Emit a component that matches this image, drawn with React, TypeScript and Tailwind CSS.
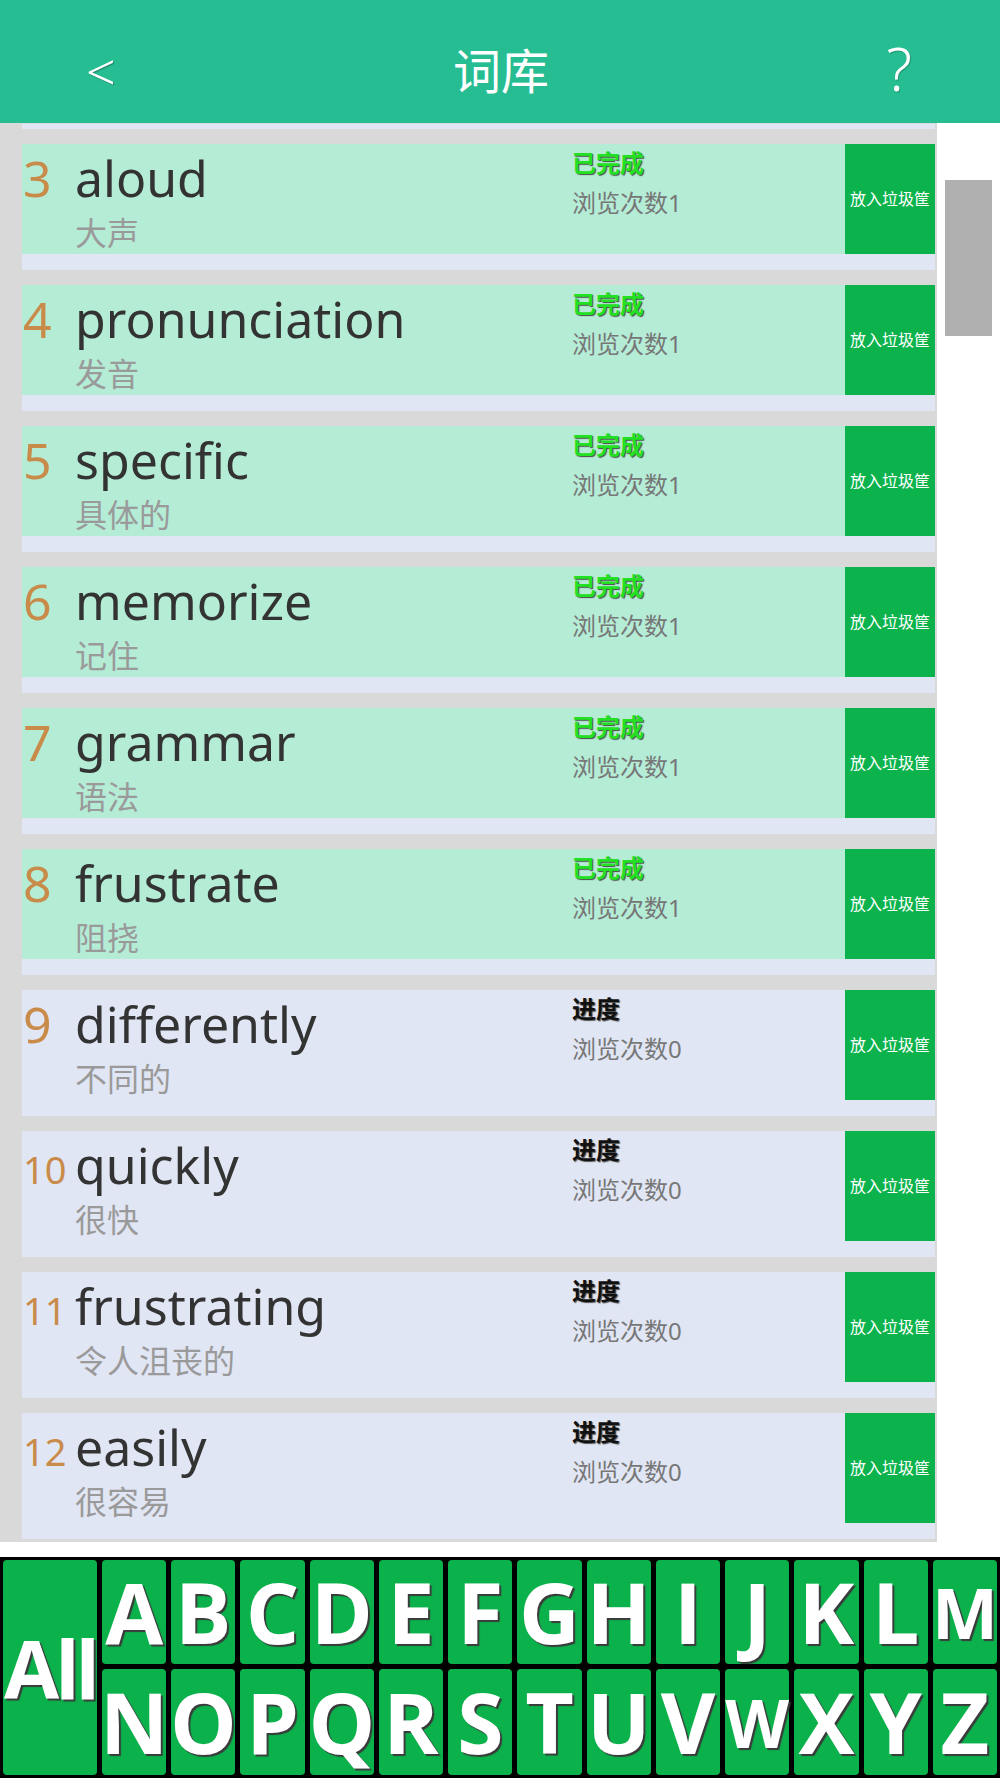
import React from "react";

type Item = { n: number; w: string; m: string; done: boolean; c: number };

const items: Item[] = [
  { n: 3, w: "aloud", m: "大声", done: true, c: 1 },
  { n: 4, w: "pronunciation", m: "发音", done: true, c: 1 },
  { n: 5, w: "specific", m: "具体的", done: true, c: 1 },
  { n: 6, w: "memorize", m: "记住", done: true, c: 1 },
  { n: 7, w: "grammar", m: "语法", done: true, c: 1 },
  { n: 8, w: "frustrate", m: "阻挠", done: true, c: 1 },
  { n: 9, w: "differently", m: "不同的", done: false, c: 0 },
  { n: 10, w: "quickly", m: "很快", done: false, c: 0 },
  { n: 11, w: "frustrating", m: "令人沮丧的", done: false, c: 0 },
  { n: 12, w: "easily", m: "很容易", done: false, c: 0 },
];

const FONT = { fontFamily: '"Noto Sans", "Noto Sans CJK SC", sans-serif' };
const KEYFONT = { fontFamily: '"Open Sans", "Noto Sans", sans-serif' };

const row1 = ["A", "B", "C", "D", "E", "F", "G", "H", "I", "J", "K", "L", "M"];
const row2 = ["N", "O", "P", "Q", "R", "S", "T", "U", "V", "W", "X", "Y", "Z"];

function Key({ k }: { k: string }) {
  const size =
    k === "M" ? "text-[70px]" : k === "W" ? "text-[66px]" : "text-[84px]";
  return (
    <div
      className={`flex min-w-0 items-center justify-center rounded-[4px] bg-[#0bb24c] font-bold leading-none text-white [text-shadow:2px_2px_1px_#3a3a3a] ${size}`}
      style={KEYFONT}
    >
      {k}
    </div>
  );
}

function Row({ it }: { it: Item }) {
  return (
    <div className="flex flex-col bg-[#e1e6f4]">
      <div
        className={`flex h-[110px] ${it.done ? "bg-[#b4ecd6]" : "bg-[#e1e6f4]"}`}
      >
        <div className="flex w-[550px] flex-col pt-[9px]">
          <div className="flex items-baseline">
            <div
              className={`w-[53px] pl-px leading-none text-[#c98b4a] ${
                it.n >= 10 ? "text-[38px]" : "text-[50px]"
              }`}
            >
              {it.n}
            </div>
            <div className="text-[50px] leading-none text-[#333333]">
              {it.w}
            </div>
          </div>
          <div className="ml-[53px] mt-[14px] text-[32px] leading-none text-[#9a9a9a]">
            {it.m}
          </div>
        </div>
        <div className="flex w-[273px] flex-col pt-[7px]">
          {it.done ? (
            <div className="text-[24px] font-bold leading-none text-[#22e022] [text-shadow:1px_1px_1px_#4a4a4a]">
              已完成
            </div>
          ) : (
            <div className="text-[24px] font-bold leading-none text-[#111111] [text-shadow:1px_1px_1px_#555555]">
              进度
            </div>
          )}
          <div className="mt-[16px] text-[24px] leading-none text-[#777777]">
            浏览次数{it.c}
          </div>
        </div>
        <div className="flex w-[90px] items-center justify-center bg-[#0cb34c] text-[16px] leading-none text-white">
          放入垃圾筐
        </div>
      </div>
      <div className="h-[16px]" />
    </div>
  );
}

export default function App() {
  return (
    <div className="flex h-[1778px] w-[1000px] flex-col bg-white" style={FONT}>
      {/* Header */}
      <div className="flex h-[123px] items-center justify-between bg-[#27bd93] pl-[86px] pr-[88px] pt-[18px] text-white">
        <div className="text-[52px] font-light leading-none [text-shadow:1px_1px_1px_rgba(0,0,0,0.3)]">
          &lt;
        </div>
        <div className="text-[48px] leading-none">词库</div>
        <div className="-mt-[6px] text-[60px] font-light leading-none [text-shadow:1px_1px_1px_rgba(0,0,0,0.2)]">
          ?
        </div>
      </div>

      {/* List */}
      <div className="flex h-[1419px] overflow-hidden">
        <div className="flex w-[937px] flex-col gap-[15px] bg-[#d9d9d9] pl-[22px] pr-[2px] pt-px">
          <div className="h-[5px] bg-[#e1e6f4]" />
          {items.map((it) => (
            <Row key={it.n} it={it} />
          ))}
        </div>
        <div className="flex-1 bg-white pl-[8px] pt-[57px]">
          <div className="h-[156px] w-[47px] bg-[#b0b0b0]" />
        </div>
      </div>

      <div className="h-[15px] bg-white" />

      {/* Keyboard */}
      <div className="grid h-[221px] grid-cols-[94px_repeat(13,minmax(0,1fr))] grid-rows-[104px_106px] gap-x-[5px] gap-y-[5px] bg-black px-[3px] pt-[3px]">
        <div
          className="row-span-2 flex items-center justify-center rounded-[4px] bg-[#0bb24c] text-[80px] font-bold leading-none tracking-[-4px] text-white [text-shadow:2px_2px_1px_#3a3a3a]"
          style={KEYFONT}
        >
          All
        </div>
        {row1.map((k) => (
          <Key key={k} k={k} />
        ))}
        {row2.map((k) => (
          <Key key={k} k={k} />
        ))}
      </div>
    </div>
  );
}
